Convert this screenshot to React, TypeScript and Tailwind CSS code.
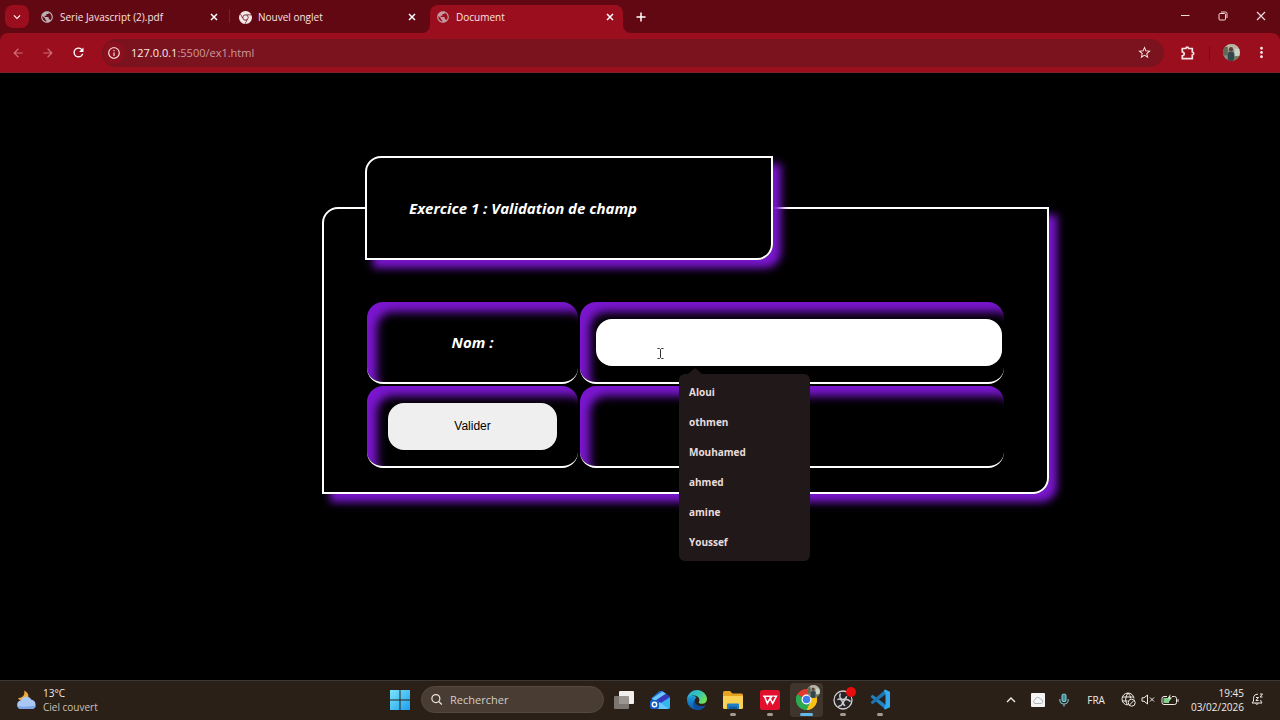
import type { ReactNode } from "react";
import {
  MdArrowBack,
  MdArrowForward,
  MdInfoOutline,
  MdKeyboardArrowDown,
  MdMoreVert,
  MdPublic,
  MdRefresh,
  MdStarBorder,
} from "react-icons/md";
import { SiGooglechrome } from "react-icons/si";

const suggestions = ["Aloui", "othmen", "Mouhamed", "ahmed", "amine", "Youssef"];

function Avatar({ size, id }: { size: number; id: string }) {
  return (
    <svg width={size} height={size} viewBox="0 0 18 18" aria-hidden="true">
      <clipPath id={id}>
        <circle cx="9" cy="9" r="9" />
      </clipPath>
      <g clipPath={`url(#${id})`}>
        <rect width="18" height="18" fill="#8b8d7d" />
        <rect width="18" height="6" fill="#b9b4a6" />
        <rect y="3" width="5" height="9" fill="#5d6a55" />
        <rect x="12" y="5" width="6" height="8" fill="#c9d3c6" />
        <circle cx="8.5" cy="5.5" r="2.2" fill="#5a4034" />
        <path d="M5 18V10.5Q5.500 8 8.500 8T12 10.500V18Z" fill="#33454d" />
        <path d="M12 13H18V18H11Z" fill="#6e7a5c" />
      </g>
    </svg>
  );
}

function Tab({ icon, title, active }: { icon: ReactNode; title: string; active?: boolean }) {
  return (
    <div
      className={
        active
          ? "relative flex h-7 w-[193px] items-center gap-[6px] rounded-t-lg bg-[#9b0e1d] pr-[7px] pb-1 pl-[7px]"
          : "relative flex h-7 w-[193px] items-center gap-[6px] pr-[7px] pb-1 pl-[7px]"
      }
    >
      {active && (
        <>
          <svg className="absolute bottom-0 -left-2" width="8" height="8" aria-hidden="true">
            <path d="M8 0V8H0A8 8 0 0 0 8 0Z" fill="#9b0e1d" />
          </svg>
          <svg className="absolute -right-2 bottom-0" width="8" height="8" aria-hidden="true">
            <path d="M0 0V8H8A8 8 0 0 1 0 0Z" fill="#9b0e1d" />
          </svg>
        </>
      )}
      {icon}
      <span className="flex-1 truncate text-[10px] leading-4 text-[#f9e3e3]">{title}</span>
      <button type="button" aria-label={`Fermer ${title}`} className="text-white">
        <svg width="12" height="12" viewBox="0 0 12 12" fill="none" stroke="currentColor" strokeWidth="1.500">
          <path d="M3 3L9 9M9 3L3 9" />
        </svg>
      </button>
    </div>
  );
}

function BrowserChrome() {
  return (
    <header className="bg-[#620812]">
      <div className="flex h-[33px] items-end">
        <button
          type="button"
          aria-label="Rechercher dans les onglets"
          className="mr-[5px] mb-[5px] ml-[5px] flex h-[23px] w-6 items-center justify-center rounded-lg bg-[#9b0e1d] text-white"
        >
          <MdKeyboardArrowDown size={14} />
        </button>
        <nav className="flex items-end">
          <Tab icon={<MdPublic size={14} className="-ml-px text-[#b9b3b5]" />} title="Serie Javascript (2).pdf" />
          <span className="mr-[2px] mb-[10px] ml-[2px] h-[14px] w-px bg-[#9b0e1d]" />
          <Tab icon={<SiGooglechrome size={13} className="text-[#f3e6e7]" />} title="Nouvel onglet" />
          <span className="w-[5px]" />
          <Tab active icon={<MdPublic size={14} className="-ml-px text-[#c59ba1]" />} title="Document" />
        </nav>
        <button type="button" aria-label="Nouvel onglet" className="mb-[9px] ml-[11px] text-white">
          <svg width="14" height="14" viewBox="0 0 14 14" fill="none" stroke="currentColor" strokeWidth="1.500">
            <path d="M7 2.500V11.500M2.500 7H11.500" />
          </svg>
        </button>
        <div className="mb-3 ml-auto flex items-center gap-7 pr-[14px] text-[#f3d9da]">
          <button type="button" aria-label="Réduire">
            <svg width="10" height="10" viewBox="0 0 10 10" stroke="currentColor">
              <path d="M1 4.500H9.500" />
            </svg>
          </button>
          <button type="button" aria-label="Restaurer">
            <svg width="10" height="10" viewBox="0 0 10 10" fill="none" stroke="currentColor">
              <rect x="1" y="2.500" width="6.500" height="6.500" rx="1" />
              <path d="M3 1H7.500Q9 1 9 2.500V7" />
            </svg>
          </button>
          <button type="button" aria-label="Fermer la fenêtre">
            <svg width="10" height="10" viewBox="0 0 10 10" stroke="currentColor" strokeWidth="1.200">
              <path d="M1 1L9 9M9 1L1 9" />
            </svg>
          </button>
        </div>
      </div>
      <div className="flex h-10 items-center rounded-t-lg border-b border-[#7b2229] bg-[#9b0e1d] text-[#f8e3e3]">
        <button type="button" aria-label="Précédent" className="ml-[11px] text-[#cf6f78]">
          <MdArrowBack size={14} />
        </button>
        <button type="button" aria-label="Suivant" className="ml-4 text-[#cf6f78]">
          <MdArrowForward size={14} />
        </button>
        <button type="button" aria-label="Actualiser" className="ml-4 text-white">
          <MdRefresh size={15} />
        </button>
        <div className="ml-4 flex h-7 flex-1 items-center rounded-full bg-[#7a131e] pr-3 pl-px">
          <button
            type="button"
            aria-label="Informations sur le site"
            className="flex size-[22px] items-center justify-center rounded-full bg-[#8a101d]"
          >
            <MdInfoOutline size={14} />
          </button>
          <span className="ml-[6px] flex-1 text-[11px] leading-4 text-[#cf9a9e]">
            <span className="text-[#fbeaea]">127.0.0.1</span>:5500/ex1.html
          </span>
          <button type="button" aria-label="Ajouter aux favoris">
            <MdStarBorder size={15} />
          </button>
        </div>
        <button type="button" aria-label="Extensions" className="ml-4">
          <svg width="16" height="16" viewBox="0 0 16 16" fill="none" stroke="currentColor" strokeWidth="1.700">
            <path d="M2.300 3.500H5.800Q6 2.200 7.200 2.200T8.600 3.500H12.300V7Q13.700 7.200 13.700 8.500T12.300 10V13.700H2.300V10.800Q4.300 10.500 4.300 8.800T2.300 6.800Z" />
          </svg>
        </button>
        <span className="ml-[13px] h-[14px] w-px bg-[#6f0f1a]" />
        <button type="button" aria-label="Profil" className="ml-[13px]">
          <Avatar size={17} id="toolbar-avatar" />
        </button>
        <button type="button" aria-label="Menu" className="mr-[10px] ml-[13px]">
          <MdMoreVert size={17} />
        </button>
      </div>
    </header>
  );
}

const cell =
  "flex h-[82px] items-center justify-center rounded-2xl border-b-2 border-white shadow-[inset_10px_10px_10px_#7b16d0]";

function ExerciseForm() {
  return (
    <form className="pt-[83px] pl-[322px]" onSubmit={(event) => event.preventDefault()}>
      <fieldset className="w-full max-w-[727px] rounded-tl-2xl rounded-br-2xl border-2 border-white pr-[43px] pb-6 pl-[41px] text-white shadow-[8px_8px_8px_#7b16d0]">
        <legend className="w-[408px] rounded-tl-2xl rounded-br-2xl border-2 border-white px-[42px] py-10 font-['Open_Sans'] text-[15px] leading-5 font-bold italic shadow-[8px_8px_8px_#7b16d0]">
          Exercice 1 : Validation de champ
        </legend>
        <div className="mt-[42px] grid grid-cols-[211px_1fr] gap-[2px] pl-[2px]">
          <div className={cell}>
            <label htmlFor="nom" className="font-['Open_Sans'] text-[15px] leading-5 font-bold italic">
              Nom :
            </label>
          </div>
          <div className={cell}>
            <div className="relative mr-[2px] ml-4 flex-1">
              <input id="nom" type="text" autoComplete="off" className="block h-[47px] w-full rounded-2xl bg-white px-4 text-black outline-none" />
              <svg className="absolute top-[29px] left-[61px]" width="7" height="11" viewBox="0 0 7 11" fill="none" stroke="#333" aria-hidden="true">
                <path d="M0.500 0.500H2.500L3.500 1.500L4.500 0.500H6.500M3.500 1.500V9.500M0.500 10.500H2.500L3.500 9.500L4.500 10.500H6.500" />
              </svg>
              <div className="absolute top-full left-[83px] mt-2 w-[131px] rounded-md bg-[#211919] pt-1 pb-[3px] font-['Open_Sans']">
                <svg className="absolute -top-[6px] left-[9px]" width="14" height="6" aria-hidden="true">
                  <path d="M0 6L6 .8Q7 0 8 .8L14 6Z" fill="#211919" />
                </svg>
                <ul>
                  {suggestions.map((name) => (
                    <li key={name}>
                      <button type="button" className="block h-[30px] w-full px-[10px] text-left text-[10px] font-bold text-[#e9dcdc]">
                        {name}
                      </button>
                    </li>
                  ))}
                </ul>
              </div>
            </div>
          </div>
          <div className={cell}>
            <button type="submit" className="h-[47px] w-[169px] rounded-2xl bg-[#efefef] font-['Liberation_Sans'] text-[12px] leading-4 text-black">
              Valider
            </button>
          </div>
          <div className={cell} />
        </div>
      </fieldset>
    </form>
  );
}

function TaskbarApp({ label, active, running, children }: { label: string; active?: boolean; running?: boolean; children: ReactNode }) {
  return (
    <div className="flex flex-1 justify-center">
      <button
        type="button"
        aria-label={label}
        className={
          active
            ? "relative flex h-[34px] w-[33px] items-center justify-center rounded bg-[#40352d]"
            : "relative flex h-[34px] w-[33px] items-center justify-center rounded"
        }
      >
        {children}
        {active && <span className="absolute bottom-px h-[3px] w-[13px] rounded-full bg-[#63b9e8]" />}
        {running && <span className="absolute bottom-px h-[3px] w-[6px] rounded-full bg-[#a39b93]" />}
      </button>
    </div>
  );
}

function MailIcon() {
  return (
    <svg width="22" height="22" viewBox="0 0 22 22" aria-hidden="true">
      <path d="M2.500 9L10 2.500Q12 1 14 2.500L20 7Q21 8 21 9V18Q21 20 19 20H5Q2.500 20 2.500 18Z" fill="#1a6fd6" />
      <path d="M3 9.500L13.500 2.500L17 4.800L6 12Z" fill="#6cc5f7" />
      <path d="M6 12L17 4.800L20.500 7.800L12 14Z" fill="#3a35bd" />
      <path d="M21 8.500V18Q21 20 19 20H9L12 14Z" fill="#36b4f2" />
      <path d="M8 12L12 14L19.500 20H5Z" fill="#69c8fb" />
      <rect x="1" y="11" width="9" height="9" rx="2" fill="#1462c4" />
      <circle cx="5.500" cy="15.500" r="2.200" fill="none" stroke="#fff" strokeWidth="1.400" />
    </svg>
  );
}

function EdgeIcon() {
  return (
    <svg width="22" height="22" viewBox="0 0 22 22" aria-hidden="true">
      <defs>
        <linearGradient id="edge-top" x1="0" y1="0" x2="1" y2=".5">
          <stop offset="0" stopColor="#2aa7e4" />
          <stop offset=".6" stopColor="#36c6b4" />
          <stop offset="1" stopColor="#6fe05a" />
        </linearGradient>
        <linearGradient id="edge-bottom" x1="0" y1="0" x2="0" y2="1">
          <stop offset="0" stopColor="#1fa0de" />
          <stop offset="1" stopColor="#0c55a8" />
        </linearGradient>
      </defs>
      <path d="M1 11A10 10 0 0 0 11 21C15 21 18 19 19.500 16.500C14 19 8.500 16 8.500 12C8.500 10.500 9.500 9.300 10.500 8.800C8 5 1.500 6 1 11Z" fill="url(#edge-bottom)" />
      <path d="M8.600 11.500C5.500 15 7.500 20 11.500 21C15 21 18 19 19.500 16.500C14 19 9 16 8.600 11.500Z" fill="#0f4e9e" />
      <path d="M1 11C1 5.500 5.500 1 11 1S21 5.500 21 10C21 13 19 14.800 16.200 14.800C13.500 14.800 12.300 13.900 12.800 13C14.500 10.500 12.500 6.500 8 6.500C4.500 6.500 1.500 8.500 1 11Z" fill="url(#edge-top)" />
    </svg>
  );
}

function ExplorerIcon() {
  return (
    <svg width="22" height="20" viewBox="0 0 22 20" aria-hidden="true">
      <path d="M1 3Q1 1 2.500 1H8L10.500 3.500H19.500Q21 3.500 21 5V10H1Z" fill="#e8a221" />
      <path d="M1 6H21V17.500Q21 19 19.500 19H2.500Q1 19 1 17.500Z" fill="#fbd155" />
      <path d="M5 14.500Q5 13.500 6 13.500H16Q17 13.500 17 14.500V19H5Z" fill="#1b7fc8" />
      <path d="M7 16.500H15V19H7Z" fill="#0e5da3" />
    </svg>
  );
}

function WpsIcon() {
  return (
    <svg width="20" height="20" viewBox="0 0 20 20" aria-hidden="true">
      <rect width="20" height="20" rx="2.500" fill="#e20f2d" />
      <path d="M3 6.300H12L9.500 9.800M4.500 6.300L7.300 13.300L10 8.500L12.700 13.300L16.300 6.300H13.500" fill="none" stroke="#fff" strokeWidth="1.600" />
    </svg>
  );
}

function ChromeIcon() {
  return (
    <svg width="21" height="21" viewBox="0 0 20 20" aria-hidden="true">
      <path d="M10 10L1.340 5A10 10 0 0 1 18.660 5Z" fill="#e33b2e" />
      <path d="M10 10L18.660 5A10 10 0 0 1 10 20Z" fill="#fbc116" />
      <path d="M10 10L10 20A10 10 0 0 1 1.340 5Z" fill="#2da94f" />
      <path d="M10 5.500H18.900A10 10 0 0 1 10 20L13.900 12.250Z" fill="#fbc116" />
      <path d="M6.100 12.250L1.340 5A10 10 0 0 0 10 20L13.900 12.250Z" fill="#2da94f" />
      <circle cx="10" cy="10" r="4.700" fill="#fff" />
      <circle cx="10" cy="10" r="3.600" fill="#3b7ded" />
    </svg>
  );
}

function ObsIcon() {
  return (
    <svg width="20" height="20" viewBox="0 0 20 20" fill="none" aria-hidden="true">
      <circle cx="10" cy="10" r="9" fill="#252328" stroke="#d5d2d2" strokeWidth="1.300" />
      <g stroke="#cfcccd" strokeWidth="1.500" strokeLinecap="round">
        <path id="obs-blade" d="M7.200 4C6 7 7.500 9.300 10 9.500C12 9.500 13.300 8.300 13.500 6.700" />
        <use href="#obs-blade" transform="rotate(120 10 10.500)" />
        <use href="#obs-blade" transform="rotate(240 10 10.500)" />
      </g>
    </svg>
  );
}

function VsCodeIcon() {
  return (
    <svg width="21" height="21" viewBox="0 0 21 21" aria-hidden="true">
      <path d="M1 7L2.500 5.800L15.500 15.500V20.500L1 8.200Z" fill="#1f84c6" />
      <path d="M1 14L2.500 15.200L15.500 5.500V.500L1 12.800Z" fill="#1b74b4" />
      <path d="M15 .500L20 2.800V18.200L15 20.500L14 19.800L15.500 15.500V5.500L14 1.200Z" fill="#35aaf0" />
    </svg>
  );
}

function Taskbar() {
  return (
    <footer className="grid h-10 grid-cols-[1fr_auto_1fr] items-center border-t border-[#3d3733] bg-[#2b2017] pb-[2px] text-[10px] leading-[14px] text-[#f0ebe6]">
      <div className="flex items-center gap-[6px] pl-4">
        <svg width="21" height="20" viewBox="0 0 21 20" aria-hidden="true">
          <path d="M8 .500C9.500 4 7 8.500 2 8C4 12.500 12 12 12.500 6.500C12.500 3.500 10.500 1.500 8 .500Z" fill="#f2a93b" />
          <path d="M5 19A4.300 4.300 0 0 1 4.700 10.500A6 6 0 0 1 15.500 9.800A4.700 4.700 0 0 1 16 19Z" fill="#a9c8f5" />
          <path d="M5 19A4.300 4.300 0 0 1 1.200 16Q10 17.500 20 15.500A4.700 4.700 0 0 1 16 19Z" fill="#7fa5e4" />
        </svg>
        <div>
          <p>13°C</p>
          <p className="text-[#c9c1ba]">Ciel couvert</p>
        </div>
      </div>
      <div className="flex items-center pl-2">
        <button type="button" aria-label="Démarrer">
          <svg width="20" height="20" viewBox="0 0 20 20" aria-hidden="true">
            <linearGradient id="start" gradientUnits="userSpaceOnUse" x1="0" y1="0" x2="20" y2="20">
              <stop offset="0" stopColor="#7ce4fb" />
              <stop offset="1" stopColor="#1ba0ee" />
            </linearGradient>
            <path d="M0 0H9.500V9.500H0ZM10.500 0H20V9.500H10.500ZM0 10.500H9.500V20H0ZM10.500 10.500H20V20H10.500Z" fill="url(#start)" />
          </svg>
        </button>
        <label className="ml-[11px] flex h-[27px] w-[183px] items-center gap-2 rounded-full border border-[#54483f] bg-[#483c33] pl-[9px]">
          <svg width="13" height="13" viewBox="0 0 13 13" fill="none" stroke="#ece5df" strokeWidth="1.400" aria-hidden="true">
            <circle cx="5.500" cy="5.500" r="4.500" />
            <path d="M9 9L12.300 12.300" />
          </svg>
          <input
            type="search"
            aria-label="Rechercher"
            placeholder="Rechercher"
            className="w-full min-w-0 bg-transparent text-[11px] text-white outline-none placeholder:text-[#d5cdc6]"
          />
        </label>
        <button type="button" aria-label="Vue des tâches" className="ml-[10px]">
          <svg width="20" height="20" viewBox="0 0 20 20" aria-hidden="true">
            <rect x="5" y="1" width="15" height="13" rx="1" fill="#f1efee" />
            <rect y="6" width="15" height="13" rx="1" fill="#8b8580" fillOpacity=".85" />
          </svg>
        </button>
        <div className="ml-2 flex w-[257px]">
          <TaskbarApp label="Outlook"><MailIcon /></TaskbarApp>
          <TaskbarApp label="Edge"><EdgeIcon /></TaskbarApp>
          <TaskbarApp label="Explorateur" running><ExplorerIcon /></TaskbarApp>
          <TaskbarApp label="WPS Office" running><WpsIcon /></TaskbarApp>
          <TaskbarApp label="Chrome" active>
            <ChromeIcon />
            <span className="absolute top-[2px] right-[3px]"><Avatar size={13} id="taskbar-avatar" /></span>
          </TaskbarApp>
          <TaskbarApp label="OBS Studio" running>
            <ObsIcon />
            <span className="absolute top-1 right-1 size-[10px] rounded-full bg-[#e80c0c]" />
          </TaskbarApp>
          <TaskbarApp label="Visual Studio Code" running><VsCodeIcon /></TaskbarApp>
        </div>
      </div>
      <div className="flex items-center justify-end pr-4">
        <svg width="10" height="6" viewBox="0 0 10 6" fill="none" stroke="currentColor" strokeWidth="1.400" aria-hidden="true">
          <path d="M1 5L5 1L9 5" />
        </svg>
        <svg className="ml-[15px]" width="14" height="14" viewBox="0 0 14 14" aria-hidden="true">
          <rect width="14" height="14" rx="1" fill="#f5f5f5" />
          <path d="M4 10.500A2 2 0 0 1 3.800 6.800A3 3 0 0 1 9.500 6.200A2.200 2.200 0 0 1 10.200 10.500Z" fill="none" stroke="#b4b4b4" />
        </svg>
        <svg className="ml-[14px]" width="10" height="14" viewBox="0 0 10 14" fill="none" stroke="#7fc3cc" strokeWidth="1.100" aria-hidden="true">
          <rect x="3" y="1" width="4" height="7.500" rx="2" fill="#3f8d99" />
          <path d="M.8 6V7A4.200 4 0 0 0 9.200 7V6M5 11V13.500" />
        </svg>
        <span className="ml-[18px]">FRA</span>
        <svg className="ml-4" width="15" height="15" viewBox="0 0 15 15" fill="none" stroke="currentColor" aria-hidden="true">
          <path d="M13 6.500A6 6 0 1 0 6.500 13M1 5H12.500M1 9H6.500M7 1Q2.500 7 6.500 13M7 1Q9.500 3.500 9.700 6.500" />
          <circle cx="10.700" cy="10.700" r="3.500" />
          <path d="M8.300 13.100L13.100 8.300" />
        </svg>
        <svg className="ml-[5px]" width="14" height="11" viewBox="0 0 14 11" fill="none" stroke="currentColor" aria-hidden="true">
          <path d="M1 3.800H3L6.500 1V10L3 7.200H1ZM9 3.500L13 7.500M13 3.500L9 7.500" />
        </svg>
        <svg className="ml-[6px]" width="18" height="12" viewBox="0 0 18 12" fill="none" stroke="currentColor" aria-hidden="true">
          <path d="M6 2.500H3Q1 2.500 1 4.500V8.500Q1 10.500 3 10.500H13.500Q15.500 10.500 15.500 8.500V4.500Q15.500 2.500 13.500 2.500H11" />
          <path d="M17 5V8" />
          <rect x="2.500" y="4" width="5.500" height="5" fill="#7fcf8a" stroke="none" />
          <path d="M9.500 0L6.500 4.500H8.500L7.500 8L11 3.500H9Z" fill="#dff5df" stroke="none" />
        </svg>
        <div className="ml-3 text-right">
          <p>19:45</p>
          <p>03/02/2026</p>
        </div>
        <svg className="ml-[7px]" width="13" height="13" viewBox="0 0 13 13" fill="none" stroke="currentColor" aria-hidden="true">
          <path d="M7 1.200Q2.500 1.200 2.500 5.500V8L1 10H11L9.800 8V7M4.500 10.500Q5.800 12.300 7.300 10.500M5 4.500H7.500L5 7.500H7.500M9 1H11.500L9 4H11.500" />
        </svg>
      </div>
    </footer>
  );
}

export default function App() {
  return (
    <div className="flex min-h-screen flex-col bg-black font-['Open_Sans','Noto_Sans',sans-serif]">
      <BrowserChrome />
      <main className="flex-1">
        <ExerciseForm />
      </main>
      <Taskbar />
    </div>
  );
}
